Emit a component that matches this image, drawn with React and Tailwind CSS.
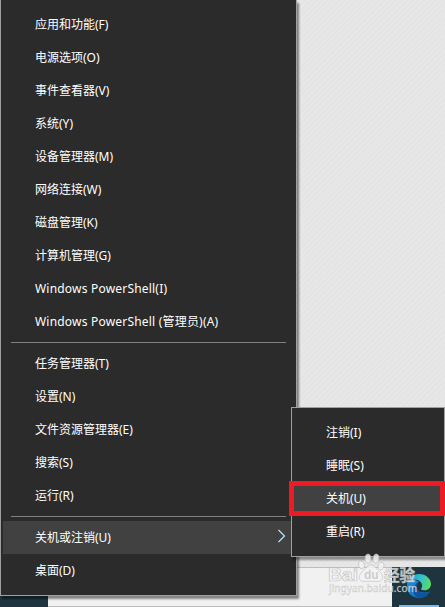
import React from "react";

const fontStack = "font-['Noto_Sans','Noto_Sans_CJK_SC',sans-serif]";

const toolItems = [
  "应用和功能(F)",
  "电源选项(O)",
  "事件查看器(V)",
  "系统(Y)",
  "设备管理器(M)",
  "网络连接(W)",
  "磁盘管理(K)",
  "计算机管理(G)",
];

const shellItems = ["Windows PowerShell(I)", "Windows PowerShell (管理员)(A)"];

const systemItems = [
  "任务管理器(T)",
  "设置(N)",
  "文件资源管理器(E)",
  "搜索(S)",
  "运行(R)",
];

const MenuItem = ({ label, className = "" }) => (
  <div className={`flex h-[33px] items-center pl-[34px] whitespace-nowrap ${className}`}>{label}</div>
);

const Separator = () => (
  <div className="flex h-[9px] items-center pr-[10px] pl-[10px]">
    <div className="h-px w-full bg-[#808080]" />
  </div>
);

const PowerMenu = () => (
  <div className="absolute top-0 left-0 h-[596px] w-[297px] border-r border-b border-l border-[#a0a0a0] bg-[#2b2b2b] pt-[8px] shadow-[2px_3px_2px_rgba(0,0,0,0.45)]">
    {toolItems.map((label) => (
      <MenuItem key={label} label={label} />
    ))}
    {shellItems.map((label) => (
      <MenuItem key={label} label={label} className="tracking-[0.2px]" />
    ))}
    <Separator />
    {systemItems.map((label) => (
      <MenuItem key={label} label={label} />
    ))}
    <Separator />
    <div className="ml-[2px] flex h-[33px] items-center justify-between bg-[#414141] pr-[10px] pl-[32px]">
      <span>关机或注销(U)</span>
      <svg className="mb-[3px] h-[14px] w-[9px]" viewBox="0 0 9 14" fill="none">
        <path d="M1 1L7 7L1 13" stroke="#d49a61" strokeWidth="1" />
        <path d="M1.6 1L7.6 7L1.6 13" stroke="#a9dcf5" strokeWidth="1.1" />
      </svg>
    </div>
    <MenuItem label="桌面(D)" />
  </div>
);

const ShutdownMenu = () => (
  <div className="absolute top-[407px] left-[291px] h-[150px] w-[154px] border border-[#a0a0a0] bg-[#2b2b2b] pt-[8px] shadow-[2px_3px_2px_rgba(0,0,0,0.4)]">
    <MenuItem label="注销(I)" />
    <MenuItem label="睡眠(S)" />
    <div className="bg-[#414141]">
      <MenuItem label="关机(U)" />
    </div>
    <MenuItem label="重启(R)" />
    {/* red marker around the shutdown entry */}
    <div className="absolute top-[73px] -left-[3px] h-[35px] w-[156px] border-[5px] border-[#ed1c24]" />
  </div>
);

const EdgeIcon = () => (
  <svg className="h-[26px] w-[26px]" viewBox="0 0 26 26">
    <defs>
      <linearGradient id="wave" x1="0" y1="0.4" x2="1" y2="0.6">
        <stop offset="0" stopColor="#1f8fdc" />
        <stop offset="0.5" stopColor="#2fbfd2" />
        <stop offset="1" stopColor="#62dc5c" />
      </linearGradient>
      <linearGradient id="deep" x1="0" y1="0" x2="0.6" y2="1">
        <stop offset="0" stopColor="#1b8fe0" />
        <stop offset="1" stopColor="#1272c4" />
      </linearGradient>
    </defs>
    <path d="M1 13C1 6 8 5 13 9C10 10 9 13 10 16C13 20 19 20 24 18.5C21 23 17 25 13 25C6 25 1 20 1 13Z" fill="url(#deep)" />
    <path d="M11 25C6 21 6 12 12 9.5C9.500 13 11 18 15 19.500C18 20.500 21 20 24 18.500C21 24 16 26 11 25Z" fill="#0f549f" />
    <path d="M1 13C1 6 6 1 13 1C20 1 25 6 25 11C25 17 18 18.500 15 16.500C14.500 16 16.500 15 16 12C15 6 5 4 1 13Z" fill="url(#wave)" />
  </svg>
);

const Taskbar = () => (
  <div className="flex h-10 bg-[#1e3540]">
    <div className="ml-[48px] w-[344px] shrink-0 border-t border-b border-[#bdbdbd] bg-[#f1f1f1]" />
    <div className="flex flex-1 flex-col items-center justify-between pt-[6px]">
      <EdgeIcon />
      <div className="h-[2px] w-10 bg-[#76b9ed]" />
    </div>
  </div>
);

const Watermark = () => (
  <svg
    className="absolute top-[550px] left-[322px] h-[50px] w-[105px] overflow-visible"
    viewBox="0 0 105 50"
    fill="#f4f4f4"
    fillOpacity="0.8"
    stroke="#b4b4b4"
    strokeOpacity="0.75"
    strokeWidth="0.7"
  >
    <ellipse cx="39.5" cy="15" rx="2.900" ry="4" transform="rotate(-15 39.5 15)" />
    <ellipse cx="46" cy="8.500" rx="2.900" ry="4.500" />
    <ellipse cx="54" cy="8.500" rx="2.900" ry="4.500" transform="rotate(10 54 8.5)" />
    <ellipse cx="59" cy="16" rx="2.900" ry="4" transform="rotate(18 59 16)" />
    <path d="M49 15C53 15 54 19 58 22C63 27 60 32 55 31.500C51 31 47 31 43 31.500C37 32 35 27 40 22C44 19 45 15 49 15Z" />
    <g className="font-['Liberation_Sans','Noto_Sans_CJK_SC',sans-serif] font-bold">
      <text x="6" y="31" fontSize="19" textLength="30" lengthAdjust="spacingAndGlyphs">Bai</text>
      <text x="42" y="29" fontSize="12" fill="#c4c4c4" stroke="none">du</text>
      <text x="62" y="31" fontSize="15.500">经验</text>
    </g>
    <text x="7" y="42" fontSize="10" textLength="88" strokeWidth="0.4" className="font-['Noto_Sans',sans-serif]">
      jingyan.baidu.com
    </text>
  </svg>
);

export default function App() {
  return (
    <div className={`relative flex h-[607px] w-[445px] flex-col overflow-hidden bg-[#e5e5e5] text-[12px] leading-none text-white ${fontStack}`}>
      <div className="flex-1 bg-[repeating-linear-gradient(135deg,#e3e3e3_0px,#e8e8e8_2px,#e4e4e4_4px)]" />
      <Taskbar />
      <PowerMenu />
      <ShutdownMenu />
      <Watermark />
    </div>
  );
}
